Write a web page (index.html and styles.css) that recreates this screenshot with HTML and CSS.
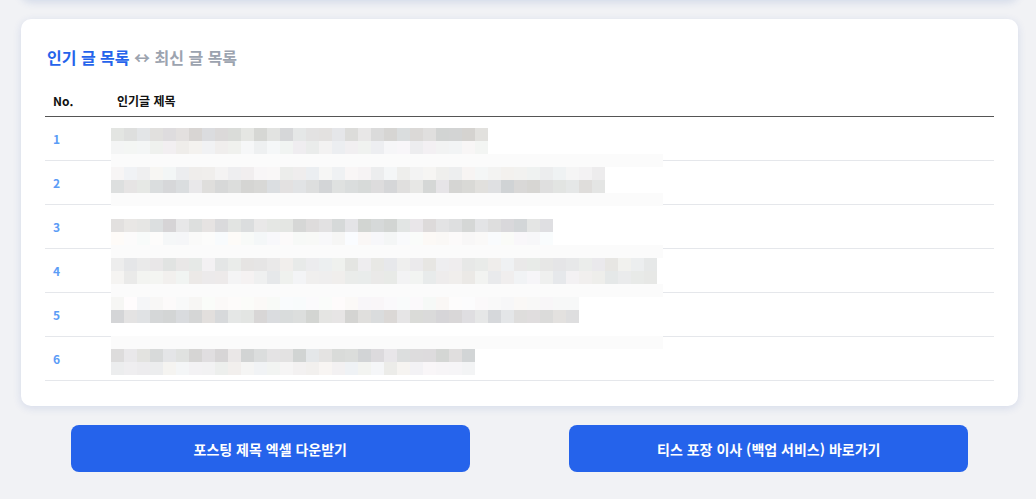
FILE: index.html
```html
<!DOCTYPE html>
<html lang="ko">
<head>
<meta charset="utf-8">
<title>인기 글 목록</title>
<link rel="stylesheet" href="styles.css">
</head>
<body>
<div class="page">
  <div class="prev-card"></div>
  <section class="card">
    <h2 class="card-title"><span class="tab-active">인기 글 목록</span> <span class="tab-inactive">↔ 최신 글 목록</span></h2>
    <div class="list">
      <div class="list-head">
        <div class="col-no">No.</div>
        <div class="col-title">인기글 제목</div>
      </div>
      <div class="list-row"><div class="col-no num">1</div><div class="col-title"></div></div>
      <div class="list-row"><div class="col-no num">2</div><div class="col-title"></div></div>
      <div class="list-row"><div class="col-no num">3</div><div class="col-title"></div></div>
      <div class="list-row"><div class="col-no num">4</div><div class="col-title"></div></div>
      <div class="list-row"><div class="col-no num">5</div><div class="col-title"></div></div>
      <div class="list-row"><div class="col-no num">6</div><div class="col-title"></div></div>
      <canvas class="mosaic" width="552" height="247"></canvas>
    </div>
  </section>
  <div class="actions">
    <button class="btn" type="button">포스팅 제목 엑셀 다운받기</button>
    <button class="btn" type="button">티스 포장 이사 (백업 서비스) 바로가기</button>
  </div>
</div>
<script src="script.js"></script>
</body>
</html>
```

FILE: styles.css
```css
* { box-sizing: border-box; }

html, body {
  margin: 0;
  padding: 0;
  background: #f1f2f5;
  font-family: "Noto Sans CJK KR", "Noto Sans", sans-serif;
  color: #111;
}

.page {
  width: 1018px;
  padding-left: 21px;
}

.prev-card {
  height: 20px;
  margin-top: -20px;
  background: #fff;
  border-radius: 0 0 10px 10px;
  box-shadow: 0 2px 8px rgba(40, 80, 170, 0.16);
}

.card {
  margin-top: 19px;
  background: #fff;
  border-radius: 10px;
  padding: 24px 24px 25px;
  box-shadow: 0 2px 9px rgba(40, 80, 170, 0.14);
}

.card-title {
  margin: 0 0 15px;
  padding-left: 2px;
  font-size: 16px;
  line-height: 28px;
  font-weight: 700;
}

.tab-active { color: #2563eb; }
.tab-inactive { color: #9ca3af; }

.list {
  position: relative;
}

.list-head,
.list-row {
  display: grid;
  grid-template-columns: 64px 1fr;
  align-items: center;
}

.list-head {
  padding: 8px 0;
  line-height: 14px;
  font-size: 12px;
  font-weight: 700;
  color: #111;
  border-bottom: 1px solid #555;
}

.list-head .col-no,
.list-head .col-title,
.list-row .col-no,
.list-row .col-title {
  padding: 0 8px;
}

.list-row {
  box-sizing: content-box;
  height: 43px;
  border-bottom: 1px solid #e5e7eb;
  font-size: 12px;
  line-height: 14px;
}

.num {
  color: #5b9cf6;
  font-weight: 700;
  padding-bottom: 2px;
}

.mosaic {
  position: absolute;
  left: 66px;
  top: 42px;
  width: 552px;
  height: 247px;
}

.actions {
  display: grid;
  grid-template-columns: 1fr 1fr;
  justify-items: center;
  margin-top: 19px;
}

.btn {
  width: 80%;
  height: 47px;
  border: 0;
  border-radius: 8px;
  background: #2563eb;
  color: #fff;
  font-family: "Noto Sans CJK KR", "Noto Sans", sans-serif;
  font-size: 14px;
  font-weight: 700;
  cursor: pointer;
}
```

FILE: script.js
```js
(function () {
  var canvas = document.querySelector('.mosaic');
  var ctx = canvas.getContext('2d');
  var seed = 20240611;
  function rnd() {
    seed |= 0; seed = seed + 0x6D2B79F5 | 0;
    var t = Math.imul(seed ^ seed >>> 15, 1 | seed);
    t = t + Math.imul(t ^ t >>> 7, 61 | t) ^ t;
    return ((t ^ t >>> 14) >>> 0) / 4294967296;
  }
  var ranges = {
    d: [211, 232],
    l: [236, 247],
    v: [246, 252],
    m: [226, 242],
    m2: [232, 245]
  };
  var rows = [
    ['d', 29], ['l', 29], ['b', 0],
    ['l', 38], ['d', 38], ['b', 0],
    ['w', 0], ['d', 34], ['v', 34], ['b', 0],
    ['m', 42], ['m2', 42], ['b', 0],
    ['v', 36], ['d', 36], ['w', 0], ['b', 0],
    ['d', 28], ['l', 28]
  ];
  var S = 13;
  ctx.fillStyle = '#ffffff';
  ctx.fillRect(0, 0, canvas.width, canvas.height);
  rows.forEach(function (row, j) {
    var y = j * S;
    var type = row[0], n = row[1];
    if (type === 'b') {
      ctx.fillStyle = '#fbfbfb';
      ctx.fillRect(0, y, canvas.width, S);
      return;
    }
    if (type === 'w') return;
    var r = ranges[type];
    for (var i = 0; i < n; i++) {
      var g = Math.round(r[0] + rnd() * (r[1] - r[0]));
      var tr = Math.round((rnd() - 0.5) * 6);
      var tb = Math.round((rnd() - 0.5) * 6);
      ctx.fillStyle = 'rgb(' + (g + tr) + ',' + g + ',' + (g + tb) + ')';
      ctx.fillRect(i * S, y, S, S);
    }
  });
})();
```
